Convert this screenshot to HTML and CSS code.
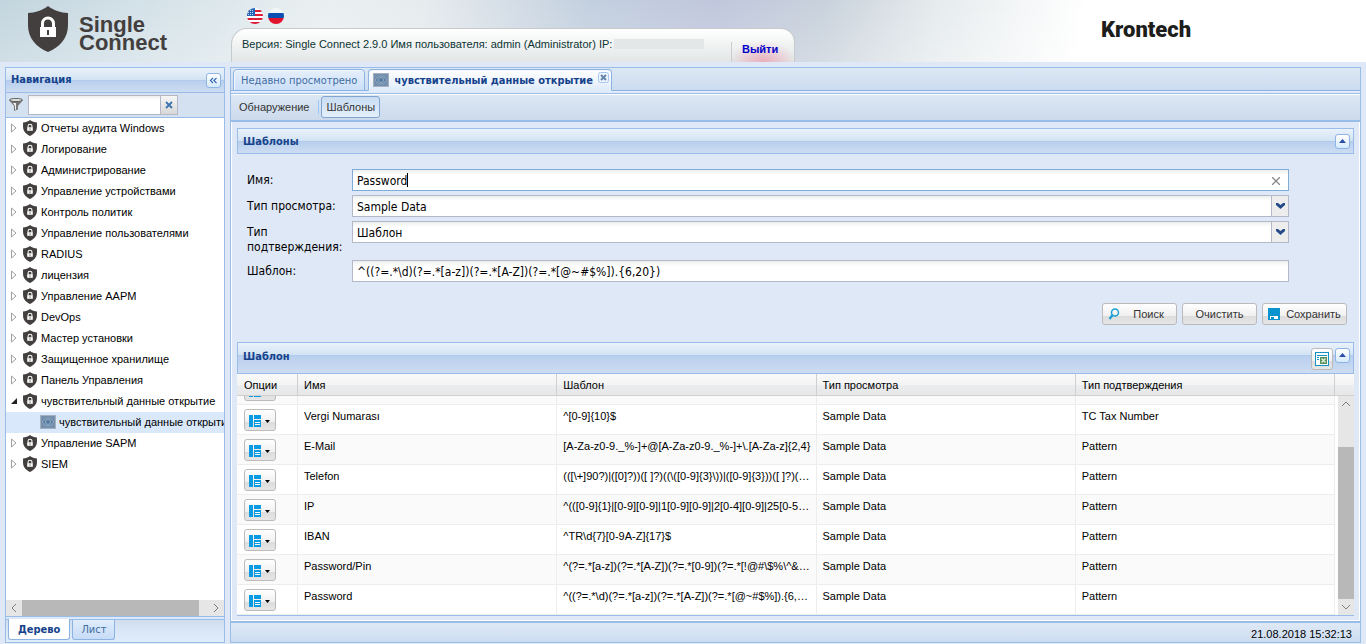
FILE: index.html
```
<!DOCTYPE html>
<html lang="ru">

<head>
    <meta charset="utf-8">
    <meta name="viewport" content="width=device-width, initial-scale=1.0">
    <title>Single Connect</title>
    <link rel="stylesheet" href="styles.css">
</head>

<body>

    <svg class="symbols" aria-hidden="true">
        <symbol id="shield" viewBox="0 0 40 46">
            <path fill="#433f3f" d="M20 0C15 4 7 7 0 7v12c0 13 8 22 20 27 12-5 20-14 20-27V7C33 7 25 4 20 0z" />
            <path fill="none" stroke="#fff" stroke-width="3" d="M14.500 22v-4.500a5.500 5.500 0 0 1 11 0V22" />
            <path fill="#fff" d="M12 21h16v10H12z" />
            <path fill="#433f3f" d="M19 24h2v5h-2z" />
        </symbol>
        <symbol id="arrow" viewBox="0 0 8 10">
            <path fill="#fff" stroke="#a0a0a0" d="M1.500 1v8L6 5z" />
        </symbol>
        <symbol id="arrow-open" viewBox="0 0 8 10">
            <path fill="#222" d="M7 2v6H1z" />
        </symbol>
        <symbol id="eye" viewBox="0 0 16 14">
            <rect width="16" height="14" rx="1" fill="#7490ad" />
            <rect x="0.500" y="0.500" width="15" height="13" fill="none" stroke="#a3b0bf" />
            <path fill="#5f82a5" stroke="#93abc4" stroke-width="0.800" d="M2 7q6-8 12 0q-6 8-12 0z" />
            <circle cx="8" cy="7" r="2.500" fill="#557a9f" stroke="#a2b8cf" stroke-width="0.800" />
        </symbol>
        <symbol id="options" viewBox="0 0 12 12">
            <path fill="#0a9be2" d="M0 0h4v12H0zM5 0h7v4H5zM5 5h7v7H5z" />
            <path stroke="#fff" d="M6 7.500h5M6 9.500h5" />
        </symbol>
    </svg>

    <header>
        <a href="#" class="logo">
            <svg class="logo-shield"><use href="#shield" /></svg>
            <span>Single<br>Connect</span>
        </a>
        <div class="account">
            <div class="flags">
                <svg viewBox="0 0 16 16">
                    <clipPath id="round"><circle cx="8" cy="8" r="8" /></clipPath>
                    <g clip-path="url(#round)">
                        <path fill="#fff" d="M0 0h16v16H0z" />
                        <path stroke="#dd1c35" stroke-width="2" d="M0 3h16M0 7h16M0 11h16M0 15h16" />
                        <path fill="#2266b5" d="M0 0h8v8H0z" />
                        <path stroke="#b9d4f0" stroke-dasharray="1 1" d="M1 2.500h6M1 4.500h6M1 6.500h6" />
                    </g>
                </svg>
                <svg viewBox="0 0 16 16">
                    <g clip-path="url(#round)">
                        <path fill="#fff" fill-opacity="0.500" d="M0 0h16v5H0z" />
                        <path fill="#0b4fb3" d="M0 5h16v5H0z" />
                        <path fill="#e0142d" d="M0 10h16v6H0z" />
                    </g>
                </svg>
            </div>
            <div class="info">
                <span>Версия: Single Connect 2.9.0 Имя пользователя: admin (Administrator) IP:</span>
                <span class="ip"></span>
                <a href="#" class="logout">Выйти</a>
            </div>
        </div>
        <div class="krontech">Krontech</div>
    </header>

    <div class="wrapper">
        <nav class="panel">
            <div class="title">
                <h2>Навигация</h2>
                <button class="tool" aria-label="Свернуть">
                    <svg viewBox="0 0 15 15"><path fill="none" stroke="#2b5fb0" d="M7 4.500l-3 3 3 3M11 4.500l-3 3 3 3" stroke-width="1.300" /></svg>
                </button>
            </div>
            <div class="search">
                <svg viewBox="0 0 14 14">
                    <path fill="#777" d="M0 2l5 6v5l4-1.500V8l5-6z" />
                    <path fill="#eee" d="M4 5l2 3v4l1-0.500V5z" />
                    <ellipse cx="7" cy="2" rx="6.500" ry="1.600" fill="#ddd" stroke="#444" stroke-width="0.800" />
                </svg>
                <input type="text" aria-label="Поиск по дереву">
                <button aria-label="Очистить поиск">
                    <svg viewBox="0 0 8 8"><path stroke="#3b73ad" stroke-width="1.800" d="M1 1l6 6M7 1L1 7" /></svg>
                </button>
            </div>
            <ul class="tree">
                <li><svg class="arrow"><use href="#arrow" /></svg><svg class="shield"><use href="#shield" /></svg><a href="#">Отчеты аудита Windows</a></li>
                <li><svg class="arrow"><use href="#arrow" /></svg><svg class="shield"><use href="#shield" /></svg><a href="#">Логирование</a></li>
                <li><svg class="arrow"><use href="#arrow" /></svg><svg class="shield"><use href="#shield" /></svg><a href="#">Администрирование</a></li>
                <li><svg class="arrow"><use href="#arrow" /></svg><svg class="shield"><use href="#shield" /></svg><a href="#">Управление устройствами</a></li>
                <li><svg class="arrow"><use href="#arrow" /></svg><svg class="shield"><use href="#shield" /></svg><a href="#">Контроль политик</a></li>
                <li><svg class="arrow"><use href="#arrow" /></svg><svg class="shield"><use href="#shield" /></svg><a href="#">Управление пользователями</a></li>
                <li><svg class="arrow"><use href="#arrow" /></svg><svg class="shield"><use href="#shield" /></svg><a href="#">RADIUS</a></li>
                <li><svg class="arrow"><use href="#arrow" /></svg><svg class="shield"><use href="#shield" /></svg><a href="#">лицензия</a></li>
                <li><svg class="arrow"><use href="#arrow" /></svg><svg class="shield"><use href="#shield" /></svg><a href="#">Управление AAPM</a></li>
                <li><svg class="arrow"><use href="#arrow" /></svg><svg class="shield"><use href="#shield" /></svg><a href="#">DevOps</a></li>
                <li><svg class="arrow"><use href="#arrow" /></svg><svg class="shield"><use href="#shield" /></svg><a href="#">Мастер установки</a></li>
                <li><svg class="arrow"><use href="#arrow" /></svg><svg class="shield"><use href="#shield" /></svg><a href="#">Защищенное хранилище</a></li>
                <li><svg class="arrow"><use href="#arrow" /></svg><svg class="shield"><use href="#shield" /></svg><a href="#">Панель Управления</a></li>
                <li><svg class="arrow"><use href="#arrow-open" /></svg><svg class="shield"><use href="#shield" /></svg><a href="#">чувствительный данные открытие</a></li>
                <li class="child"><svg class="eye"><use href="#eye" /></svg><a href="#">чувствительный данные открытие</a></li>
                <li><svg class="arrow"><use href="#arrow" /></svg><svg class="shield"><use href="#shield" /></svg><a href="#">Управление SAPM</a></li>
                <li><svg class="arrow"><use href="#arrow" /></svg><svg class="shield"><use href="#shield" /></svg><a href="#">SIEM</a></li>
            </ul>
            <div class="scroll-x">
                <svg viewBox="0 0 16 16"><path d="M10 4L6 8l4 4" /></svg>
                <div class="thumb"></div>
                <svg viewBox="0 0 16 16"><path d="M6 4l4 4-4 4" /></svg>
            </div>
            <div class="bottomtabs">
                <button class="active">Дерево</button>
                <button>Лист</button>
            </div>
        </nav>

        <main class="panel">
            <div class="tabs">
                <button>Недавно просмотрено</button>
                <button class="active">
                    <svg class="eye"><use href="#eye" /></svg>
                    чувствительный данные открытие
                    <svg class="close" viewBox="0 0 11 11">
                        <rect x="0.500" y="0.500" width="10" height="10" rx="2" fill="#eef4fc" stroke="#a9c6ee" />
                        <path stroke="#6685ad" stroke-width="2" d="M3 3l5 5M8 3L3 8" />
                    </svg>
                </button>
            </div>
            <div class="toolbar">
                <button>Обнаружение</button>
                <button class="pressed">Шаблоны</button>
            </div>

            <div class="content">
                <section>
                    <div class="title">
                        <h2>Шаблоны</h2>
                        <button class="tool" aria-label="Свернуть">
                            <svg viewBox="0 0 13 13"><path fill="#2b4fa8" d="M3 8l3.500-4L10 8z" /></svg>
                        </button>
                    </div>
                    <form>
                        <div class="row">
                            <label for="name">Имя:</label>
                            <div class="field focus">
                                <input type="text" id="name" value="Password">
                                <span class="caret"></span>
                                <svg class="clear" viewBox="0 0 8 8"><path stroke="#888" stroke-width="1.300" d="M0 0l8 8M8 0L0 8" /></svg>
                            </div>
                        </div>
                        <div class="row">
                            <label for="view">Тип просмотра:</label>
                            <div class="field">
                                <select id="view"><option>Sample Data</option></select>
                                <span class="trigger"><svg viewBox="0 0 9 6"><path d="M0 0h2l2.500 2L7 0h2v2L4.500 6 0 2z" /></svg></span>
                            </div>
                        </div>
                        <div class="row">
                            <label for="check">Тип подтверждения:</label>
                            <div class="field">
                                <select id="check"><option>Шаблон</option></select>
                                <span class="trigger"><svg viewBox="0 0 9 6"><path d="M0 0h2l2.500 2L7 0h2v2L4.500 6 0 2z" /></svg></span>
                            </div>
                        </div>
                        <div class="row">
                            <label for="pattern">Шаблон:</label>
                            <div class="field">
                                <input type="text" id="pattern" value="^((?=.*\d)(?=.*[a-z])(?=.*[A-Z])(?=.*[@~#$%]).{6,20})">
                            </div>
                        </div>
                    </form>
                    <div class="buttons">
                        <button class="btn">
                            <svg viewBox="0 0 12 12"><circle cx="7" cy="4.500" r="3.500" /><path d="M4.500 7L1.500 11" stroke-width="2.200" /></svg>
                            <span>Поиск</span>
                        </button>
                        <button class="btn"><span>Очистить</span></button>
                        <button class="btn save">
                            <svg viewBox="0 0 12 12"><path fill="#0a94cf" stroke="none" d="M0 0h12v12H0z" /><path fill="#fff" stroke="none" d="M2 8h8v3H2z" /><path fill="#0a94cf" stroke="none" d="M3 9h3v2H3z" /></svg>
                            <span>Сохранить</span>
                        </button>
                    </div>
                </section>

                <section>
                    <div class="title high">
                        <h2>Шаблон</h2>
                        <button class="btn excel" aria-label="Экспорт в Excel">
                            <svg viewBox="0 0 14 14">
                                <rect x="0.500" y="0.500" width="13" height="13" fill="#fff" stroke="#1592c4" />
                                <path d="M2 3.500h10M2 5.500h2M2 7.500h2" stroke="#1592c4" />
                                <rect x="5" y="5" width="7" height="7" fill="#58915a" />
                                <path d="M6.500 6.500l4 4M10.500 6.500l-4 4" stroke="#e4f2e0" stroke-width="1.300" />
                            </svg>
                        </button>
                        <button class="tool" aria-label="Свернуть">
                            <svg viewBox="0 0 13 13"><path fill="#2b4fa8" d="M3 8l3.500-4L10 8z" /></svg>
                        </button>
                    </div>
                    <div class="grid">
                        <table>
                            <thead>
                                <tr>
                                    <th class="opt">Опции</th>
                                    <th>Имя</th>
                                    <th>Шаблон</th>
                                    <th>Тип просмотра</th>
                                    <th>Тип подтверждения</th>
                                </tr>
                            </thead>
                            <tbody>
                            </tbody>
                        </table>
                        <div class="side">
                            <div class="corner"></div>
                            <div class="scroll-y">
                                <svg viewBox="0 0 16 16"><path d="M4 10l4-4 4 4" /></svg>
                                <div class="thumb"></div>
                                <svg viewBox="0 0 16 16"><path d="M4 6l4 4 4-4" /></svg>
                            </div>
                        </div>
                    </div>
                </section>
            </div>
            <footer>21.08.2018 15:32:13</footer>
        </main>
    </div>

    <script>
        const rows = [
            ["", "", "", ""],
            ["Vergi Numarası", "^[0-9]{10}$", "Sample Data", "TC Tax Number"],
            ["E-Mail", "[A-Za-z0-9._%-]+@[A-Za-z0-9._%-]+\\.[A-Za-z]{2,4}", "Sample Data", "Pattern"],
            ["Telefon", "(([\\+]90?)|([0]?))([ ]?)((\\([0-9]{3}\\))|([0-9]{3}))([ ]?)([0-9]", "Sample Data", "Pattern"],
            ["IP", "^(([0-9]{1}|[0-9][0-9]|1[0-9][0-9]|2[0-4][0-9]|25[0-5]){3}", "Sample Data", "Pattern"],
            ["IBAN", "^TR\\d{7}[0-9A-Z]{17}$", "Sample Data", "Pattern"],
            ["Password/Pin", "^(?=.*[a-z])(?=.*[A-Z])(?=.*[0-9])(?=.*[!@#\\$%\\^&\\*])", "Sample Data", "Pattern"],
            ["Password", "^((?=.*\\d)(?=.*[a-z])(?=.*[A-Z])(?=.*[@~#$%]).{6,20})", "Sample Data", "Pattern"]
        ];
        const tbody = document.querySelector("tbody");

        rows.forEach((row, i) => {
            const tr = document.createElement("tr");
            // the first row is scrolled almost out of view
            if (i === 0) tr.className = "cut";
            tr.innerHTML = `<td class="opt"><div><button class="btn menu" aria-label="Опции">
                <svg class="options"><use href="#options" /></svg>
                <svg class="down" viewBox="0 0 5 3"><path d="M0 0h5L2.500 3z" /></svg></button></div></td>`;
            row.forEach(text => {
                const td = document.createElement("td");
                td.textContent = text;
                tr.appendChild(td);
            });
            tbody.appendChild(tr);
        });
    </script>

</body>

</html>
```
FILE: styles.css
```
* {
    box-sizing: border-box;
}

body {
    background: #dfe8f6;
    font-family: "Liberation Sans", Arial, sans-serif;
    font-size: 11px;
    color: #000;
    margin: 0;
    min-height: 100vh;
    display: flex;
    flex-direction: column;
}

h2,
form,
.tabs button,
.bottomtabs button {
    font-family: "DejaVu Sans Condensed", Tahoma, sans-serif;
}

a {
    color: inherit;
    text-decoration: none;
}

button,
input,
select {
    font: inherit;
    color: inherit;
    margin: 0;
    border-radius: 0;
}

button {
    cursor: pointer;
    padding: 0;
}

svg {
    display: block;
    flex: none;
}

.symbols {
    position: absolute;
    width: 0;
    height: 0;
}

/* header */

header {
    height: 62px;
    display: flex;
    background:
        linear-gradient(to bottom, rgba(255, 255, 255, 0), rgba(255, 255, 255, 0.2)),
        linear-gradient(100deg, #c3d5de 0, #d3e1e8 10%, #eaf0f1 24%, #e6ebee 31%, #c3d0df 43%, #c0c7dd 52%, #c9d2dc 60%, #e6ebed 68%, #fff 79%);
}

.logo {
    display: flex;
    width: 231px;
    padding: 6px 0 0 28px;
    gap: 11px;
    color: #433f3f;
    font-size: 22px;
    line-height: 18px;
    font-weight: bold;
}

.logo span {
    padding-top: 10px;
}

.logo-shield {
    width: 40px;
    height: 46px;
}

.account {
    width: 564px;
}

.flags {
    display: flex;
    gap: 5px;
    height: 28px;
    padding: 8px 0 0 16px;
}

.flags svg {
    width: 16px;
    height: 16px;
}

.info {
    height: 34px;
    display: flex;
    align-items: center;
    border: 1px solid #c6caca;
    border-bottom: 0;
    border-radius: 16px 14px 0 0;
    padding: 0 0 3px 10px;
    background: linear-gradient(#fff, #e2e6e6);
    color: #0b3432;
    overflow: hidden;
}

.ip {
    width: 90px;
    height: 10px;
    margin-left: 2px;
    background: #e4e7e8;
}

.logout {
    align-self: flex-end;
    margin: 0 0 -3px auto;
    width: 63px;
    height: 20px;
    padding: 1px 0 0 10px;
    border-left: 1px solid #ccc;
    background: radial-gradient(ellipse at 50% 100%, rgba(238, 150, 170, 0.7), rgba(238, 160, 180, 0) 75%);
    color: #0000c8;
    font-weight: bold;
}

.krontech {
    margin-left: auto;
    width: 265px;
    padding-top: 15px;
    font-family: Roboto, "Liberation Sans", sans-serif;
    font-size: 22px;
    line-height: 30px;
    font-weight: 900;
    color: #1d1d1b;
}

/* panels */

.wrapper {
    flex: 1;
    display: flex;
    gap: 5px;
    padding: 5px 5px 1px;
}

.panel {
    border: 1px solid #99bce8;
    display: flex;
    flex-direction: column;
}

nav {
    width: 220px;
    flex: none;
}

main {
    flex: 1;
    min-width: 0;
}

.title {
    display: flex;
    align-items: center;
    gap: 2px;
    height: 26px;
    padding: 0 3px 0 5px;
    border: 1px solid #99bce8;
    background: linear-gradient(#eaf2fb 0, #d3e3f3 12px, #a9c6ea 12px, #b9cfee 13px, #cdddf2 100%);
}

.panel > .title {
    height: 25px;
    border-width: 0 0 1px;
}

.title h2 {
    flex: 1;
    margin: 0;
    font-size: 11px;
    line-height: 14px;
    color: #15428b;
}

section .title h2 {
    padding-top: 2px;
}

.title.high {
    height: 32px;
    align-items: flex-start;
    padding-top: 5px;
}

.tool {
    width: 15px;
    height: 15px;
    border: 1px solid #8eb4e6;
    border-radius: 3px;
    background: linear-gradient(#fff, #d5eafb);
}

.tool svg {
    width: 13px;
    height: 13px;
}

/* navigation */

.search {
    display: flex;
    align-items: center;
    height: 25px;
    padding-left: 3px;
    border-bottom: 1px solid #99bce8;
    background: #d3e1f1;
}

.search > svg {
    width: 14px;
    height: 14px;
    margin-right: 5px;
}

.search input {
    width: 133px;
    height: 20px;
    border: 1px solid #b5b8c8;
    background: linear-gradient(#eee, #fff 4px);
}

.search button {
    display: flex;
    align-items: center;
    justify-content: center;
    width: 17px;
    height: 20px;
    border: 1px solid #b5b8c8;
    border-left: 0;
    background: linear-gradient(#f6f6f6, #d8d8d8);
}

.search button svg {
    width: 8px;
    height: 8px;
}

.tree {
    flex: 1;
    list-style: none;
    margin: 0;
    padding: 0;
    background: #fff;
    overflow: hidden;
}

.tree li {
    display: flex;
    align-items: center;
    height: 21px;
    padding: 0 0 1px 4px;
    white-space: nowrap;
}

.tree .child {
    padding-left: 34px;
    background: #d9e8fb;
}

.arrow {
    width: 8px;
    height: 10px;
    margin-right: 5px;
}

.shield {
    width: 14px;
    height: 16px;
    margin-right: 4px;
}

.eye {
    width: 16px;
    height: 14px;
    margin-right: 3px;
}

.scroll-x {
    display: flex;
    height: 16px;
    background: #e6e6e6;
}

.scroll-x svg,
.scroll-y svg {
    width: 16px;
    height: 16px;
    fill: none;
    stroke: #808080;
}

.scroll-x .thumb {
    flex: 1;
    margin-right: 9px;
    background: #b8b8b8;
}

.bottomtabs {
    display: flex;
    gap: 2px;
    height: 26px;
    padding: 0 2px 2px;
    border-top: 1px solid #99bce8;
    background: linear-gradient(#dce9fa 2px, #99bce8 2px, #99bce8 3px, #d0def0 3px, #e0eefb);
}

.bottomtabs button {
    margin-top: 3px;
    padding: 0 8px;
    border: 1px solid #8db3e3;
    border-top: 0;
    border-radius: 0 0 3px 3px;
    background: linear-gradient(#dfecfb, #c8dcf7);
    color: #416da3;
}

.bottomtabs .active {
    margin-top: 2px;
    padding: 0 9px;
    background: #fff;
    color: #15428b;
    font-weight: bold;
}

/* tabs and toolbar */

.tabs {
    display: flex;
    align-items: flex-end;
    gap: 3px;
    height: 26px;
    padding: 0 2px 2px;
    border-bottom: 1px solid #99bce8;
    background: linear-gradient(#dde8f5, #cbdbef 22px, #8db3e3 22px, #8db3e3 23px, #e0ecfb 23px);
}

.tabs button {
    display: flex;
    align-items: center;
    height: 22px;
    padding: 0 7px;
    border: 1px solid #8db3e3;
    border-radius: 4px 4px 0 0;
    background: linear-gradient(#e6effb, #cbdff8);
    box-shadow: inset 1px 1px 0 #f3f8fe;
    color: #416da3;
}

.tabs .active {
    padding: 0 2px 0 4px;
    border-bottom-color: #e0ecfb;
    background: linear-gradient(#fff, #e0ecfb);
    color: #15428b;
    font-weight: bold;
}

.tabs .eye {
    margin-right: 5px;
}

.close {
    align-self: flex-start;
    width: 11px;
    height: 11px;
    margin: 2px 0 0 5px;
}

.toolbar {
    display: flex;
    align-items: center;
    gap: 5px;
    height: 28px;
    padding-left: 3px;
    border-bottom: 2px solid #99bce8;
    background: linear-gradient(#fff 1px, #dce7f4 1px, #ccdaec);
}

.toolbar button {
    height: 22px;
    padding: 0 4px;
    border: 1px solid transparent;
    background: none;
    color: #333;
}

.toolbar .pressed {
    position: relative;
    margin-left: 2px;
    border-color: #81a4d0;
    border-radius: 3px;
    background: linear-gradient(#c9dcf2, #e4f0fd);
}

.toolbar .pressed::before {
    content: "";
    position: absolute;
    left: -4px;
    top: 3px;
    width: 1px;
    height: 14px;
    background: #98c8ff;
}

.content {
    flex: 1;
    padding: 6px 5px 4px;
    border: solid #fff;
    border-width: 0 1px 1px;
    box-shadow: inset 0 0 0 1px #dfe8f6;
}

/* form */

form {
    width: 95%;
    padding: 15px 0 0 10px;
    font-size: 12px;
    box-sizing: content-box;
    max-width: calc(95% - 19px);
}

.row {
    display: flex;
    align-items: flex-start;
    margin-bottom: 4px;
}

.row label {
    width: 105px;
    padding: 4px 5px 0 0;
    line-height: 15px;
}

.row:nth-child(3) {
    margin-bottom: 5px;
}

.field {
    position: relative;
    flex: 1;
}

.field input,
.field select {
    display: block;
    appearance: none;
    width: 100%;
    height: 22px;
    padding: 2px 4px 0;
    border: 1px solid #b5b8c8;
    background: linear-gradient(#eceeee, #fff 5px);
    outline: 0;
}

.field.focus input {
    border-color: #7eadd9;
}

.caret {
    position: absolute;
    left: 55px;
    top: 4px;
    width: 1px;
    height: 14px;
    background: #000;
}

.clear {
    position: absolute;
    right: 9px;
    top: 8px;
    width: 8px;
    height: 8px;
}

.trigger {
    position: absolute;
    right: 0;
    top: 0;
    width: 18px;
    height: 22px;
    padding: 7px 4px;
    border: 1px solid #b5b8c8;
    background: #ededee;
    pointer-events: none;
}

.trigger svg {
    width: 9px;
    height: 6px;
    fill: #264a87;
}

.buttons {
    display: flex;
    justify-content: flex-end;
    gap: 5px;
    padding: 17px 7px;
}

.btn {
    display: flex;
    align-items: center;
    width: 75px;
    height: 22px;
    padding: 0 5px;
    border: 1px solid #bbb;
    border-radius: 3px;
    background: linear-gradient(#fff, #f0f0f0 60%, #dcdcdc 60%, #e6e6e6);
    color: #333;
}

.btn span {
    flex: 1;
    text-align: center;
}

.buttons svg {
    width: 12px;
    height: 12px;
    fill: none;
    stroke: #1a9fd4;
    stroke-width: 1.5px;
}

.buttons .btn svg + span {
    padding-left: 6px;
}

.btn.save {
    width: 85px;
}

.btn.excel {
    width: 22px;
    height: 22px;
    padding: 0 3px;
}

.excel svg {
    width: 14px;
    height: 14px;
}

/* grid */

.grid {
    display: flex;
    border-bottom: 1px solid #99bce8;
    background: #fff;
}

table {
    flex: 1;
    width: 0;
    table-layout: fixed;
    border-spacing: 0;
}

th,
td {
    padding: 5px 5px 0 6px;
    text-align: left;
    vertical-align: top;
    font-weight: normal;
    line-height: 13px;
    white-space: nowrap;
    overflow: hidden;
    text-overflow: ellipsis;
}

th,
.corner {
    height: 22px;
    border-right: 1px solid #d0d0d0;
    border-bottom: 1px solid #d0d0d0;
    background: linear-gradient(#f9f9f9, #f3f4f4 50%, #eceded 50%, #e6e7e9);
}

.corner {
    border-right: 0;
}

td {
    height: 30px;
    border-right: 1px solid #ededed;
    border-bottom: 1px solid #ededed;
}

th.opt {
    width: 61px;
}

td.opt {
    padding: 4px 0 0 7px;
}

th.opt {
    padding-left: 7px;
}

tbody tr:nth-child(odd) {
    background: #fafafa;
}

.cut td,
.cut td.opt {
    height: 9px;
    padding-top: 0;
}

.cut div {
    display: flex;
    align-items: flex-end;
    height: 5px;
    margin-bottom: 3px;
    overflow: hidden;
}

.menu {
    width: 32px;
    padding: 2px 4px 0;
    flex: none;
}

.options {
    width: 12px;
    height: 12px;
}

.down {
    width: 5px;
    height: 3px;
    margin-left: 4px;
}

.side {
    width: 19px;
    display: flex;
    flex-direction: column;
}

.scroll-y {
    flex: 1;
    display: flex;
    flex-direction: column;
    margin-left: 3px;
    background: #e6e6e6;
}

.scroll-y .thumb {
    flex: 1;
    margin-top: 35px;
    background: #b8b8b8;
}

footer {
    height: 21px;
    padding: 4px 8px 0;
    border-top: 2px solid #99bce8;
    background: linear-gradient(#dfe9f6, #ccdcf0);
    text-align: right;
    line-height: 14px;
}
```
